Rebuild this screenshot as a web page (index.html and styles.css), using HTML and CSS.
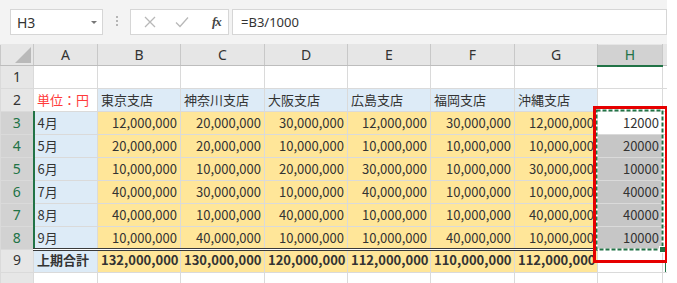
FILE: index.html
```html
<!DOCTYPE html>
<html lang="ja">
<head>
    <meta charset="UTF-8">
    <title>上期合計</title>
    <link rel="stylesheet" href="styles.css">
</head>
<body>
    <div class="app">
        <div class="formula-bar">
            <div class="name-box">
                <span>H3</span>
                <span class="caret"></span>
            </div>
            <div class="grip">
                <span></span><span></span><span></span>
            </div>
            <div class="fx-box">
                <svg class="icon" width="12" height="12" viewBox="0 0 12 12">
                    <path d="M1 1 L11 11 M11 1 L1 11" stroke="#b8b8b8" stroke-width="1.3" fill="none"/>
                </svg>
                <svg class="icon" width="14" height="12" viewBox="0 0 14 12">
                    <path d="M1 6.5 L5 10.5 L13 1.5" stroke="#b8b8b8" stroke-width="1.3" fill="none"/>
                </svg>
                <span class="fx">fx</span>
            </div>
            <div class="formula-input">=B3/1000</div>
        </div>

        <div class="sheet">
            <table class="grid">
                <colgroup>
                    <col class="c-head">
                    <col class="c-a">
                    <col class="c-b">
                    <col class="c-c">
                    <col class="c-d">
                    <col class="c-e">
                    <col class="c-f">
                    <col class="c-g">
                    <col class="c-h">
                    <col class="c-i">
                </colgroup>
                <tr class="col-heads">
                    <th class="corner"><span class="tri"></span></th>
                    <th>A</th><th>B</th><th>C</th><th>D</th><th>E</th><th>F</th><th>G</th>
                    <th class="sel">H</th><th></th>
                </tr>
                <tr>
                    <th class="rh">1</th>
                    <td></td><td></td><td></td><td></td><td></td><td></td><td></td><td></td><td></td>
                </tr>
                <tr>
                    <th class="rh">2</th>
                    <td class="unit">単位：円</td>
                    <td class="blue">東京支店</td>
                    <td class="blue">神奈川支店</td>
                    <td class="blue">大阪支店</td>
                    <td class="blue">広島支店</td>
                    <td class="blue">福岡支店</td>
                    <td class="blue">沖縄支店</td>
                    <td></td><td></td>
                </tr>
                <tr>
                    <th class="rh sel">3</th>
                    <td class="blue">4月</td>
                    <td class="yellow num">12,000,000</td>
                    <td class="yellow num">20,000,000</td>
                    <td class="yellow num">30,000,000</td>
                    <td class="yellow num">12,000,000</td>
                    <td class="yellow num">30,000,000</td>
                    <td class="yellow num">12,000,000</td>
                    <td class="num active">12000</td><td></td>
                </tr>
                <tr>
                    <th class="rh sel">4</th>
                    <td class="blue">5月</td>
                    <td class="yellow num">20,000,000</td>
                    <td class="yellow num">20,000,000</td>
                    <td class="yellow num">10,000,000</td>
                    <td class="yellow num">10,000,000</td>
                    <td class="yellow num">10,000,000</td>
                    <td class="yellow num">10,000,000</td>
                    <td class="num picked">20000</td><td></td>
                </tr>
                <tr>
                    <th class="rh sel">5</th>
                    <td class="blue">6月</td>
                    <td class="yellow num">10,000,000</td>
                    <td class="yellow num">10,000,000</td>
                    <td class="yellow num">20,000,000</td>
                    <td class="yellow num">30,000,000</td>
                    <td class="yellow num">10,000,000</td>
                    <td class="yellow num">30,000,000</td>
                    <td class="num picked">10000</td><td></td>
                </tr>
                <tr>
                    <th class="rh sel">6</th>
                    <td class="blue">7月</td>
                    <td class="yellow num">40,000,000</td>
                    <td class="yellow num">30,000,000</td>
                    <td class="yellow num">10,000,000</td>
                    <td class="yellow num">40,000,000</td>
                    <td class="yellow num">10,000,000</td>
                    <td class="yellow num">10,000,000</td>
                    <td class="num picked">40000</td><td></td>
                </tr>
                <tr>
                    <th class="rh sel">7</th>
                    <td class="blue">8月</td>
                    <td class="yellow num">40,000,000</td>
                    <td class="yellow num">10,000,000</td>
                    <td class="yellow num">40,000,000</td>
                    <td class="yellow num">10,000,000</td>
                    <td class="yellow num">10,000,000</td>
                    <td class="yellow num">40,000,000</td>
                    <td class="num picked">40000</td><td></td>
                </tr>
                <tr>
                    <th class="rh sel">8</th>
                    <td class="blue">9月</td>
                    <td class="yellow num">10,000,000</td>
                    <td class="yellow num">40,000,000</td>
                    <td class="yellow num">10,000,000</td>
                    <td class="yellow num">10,000,000</td>
                    <td class="yellow num">40,000,000</td>
                    <td class="yellow num">10,000,000</td>
                    <td class="num picked">10000</td><td></td>
                </tr>
                <tr class="total">
                    <th class="rh">9</th>
                    <td class="blue">上期合計</td>
                    <td class="yellow num">132,000,000</td>
                    <td class="yellow num">130,000,000</td>
                    <td class="yellow num">120,000,000</td>
                    <td class="yellow num">112,000,000</td>
                    <td class="yellow num">110,000,000</td>
                    <td class="yellow num">112,000,000</td>
                    <td></td><td></td>
                </tr>
                <tr>
                    <th class="rh"></th>
                    <td></td><td></td><td></td><td></td><td></td><td></td><td></td><td></td><td></td>
                </tr>
            </table>

            <!-- copy marquee around H3:H8 -->
            <svg class="marquee" width="69" height="142" viewBox="0 0 69 142">
                <rect x="1.5" y="1.5" width="66" height="139" fill="none" stroke="#fff" stroke-width="2"/>
                <rect x="1.5" y="1.5" width="66" height="139" fill="none" stroke="#217346" stroke-width="2" stroke-dasharray="4 2"/>
            </svg>
            <span class="handle"></span>
            <span class="tail"></span>
            <div class="callout"></div>
        </div>
    </div>
</body>
</html>
```

FILE: styles.css
```css
body {
    margin: 0;
    background: #fff;
    font-family: "Noto Sans CJK JP", "Noto Sans", sans-serif;
    color: #333;
}
.app {
    width: 667px;
    height: 283px;
    overflow: hidden;
}
.formula-bar {
    height: 44px;
    background: #f3f3f3;
    display: flex;
    align-items: flex-start;
    padding-top: 9px;
    box-sizing: border-box;
}
.name-box {
    margin-left: 10px;
    width: 93px;
    height: 26px;
    box-sizing: border-box;
    background: #fff;
    border: 1px solid #d6d6d6;
    display: flex;
    align-items: center;
    justify-content: space-between;
    padding: 0 5px 0 6px;
    font-family: "Noto Sans", sans-serif;
    font-size: 14px;
    color: #333;
}
.caret {
    width: 0;
    height: 0;
    border-left: 3px solid transparent;
    border-right: 3px solid transparent;
    border-top: 3px solid #777;
}
.grip {
    width: 27px;
    display: flex;
    flex-direction: column;
    align-items: center;
    gap: 2px;
    padding-top: 7px;
}
.grip span {
    width: 2px;
    height: 2px;
    background: #b5b5b5;
}
.fx-box {
    width: 99px;
    height: 26px;
    box-sizing: border-box;
    background: #fff;
    border: 1px solid #d6d6d6;
    display: flex;
    align-items: center;
    padding-left: 13px;
    gap: 19px;
}
.fx {
    font-family: "Liberation Serif", serif;
    font-style: italic;
    font-weight: bold;
    font-size: 13px;
    color: #444;
    letter-spacing: -1px;
    margin-left: 4px;
}
.formula-input {
    margin-left: 3px;
    flex: 1;
    height: 26px;
    box-sizing: border-box;
    background: #fff;
    border: 1px solid #d6d6d6;
    padding-left: 8px;
    font-family: "Noto Sans", sans-serif;
    font-size: 13px;
    line-height: 24px;
    color: #333;
}

.sheet {
    position: relative;
}
.grid {
    border-collapse: collapse;
    table-layout: fixed;
    width: 672px;
    font-size: 13px;
}
.c-head { width: 33px; }
.c-a { width: 64px; }
.c-b { width: 83px; }
.c-c { width: 84px; }
.c-d { width: 83px; }
.c-e { width: 83px; }
.c-f { width: 84px; }
.c-g { width: 83px; }
.c-h { width: 65px; }
.c-i { width: 10px; }

.grid tr {
    height: 23px;
}
.grid tr.col-heads {
    height: 21px;
}
.grid th,
.grid td {
    padding: 0 3px;
    border: 1px solid #dadada;
    white-space: nowrap;
    overflow: hidden;
    line-height: 16px;
}
.col-heads th {
    background: #e6e6e6;
    border-color: #e6e6e6 #c8c8c8 #bdbdbd;
    font-family: "Noto Sans", sans-serif;
    font-weight: normal;
    font-size: 14px;
    color: #333;
}
.col-heads th.sel {
    background: #d2d2d2;
    color: #217346;
    border-bottom: 2px solid #217346;
}
.corner {
    position: relative;
}
.tri {
    position: absolute;
    right: 2px;
    bottom: 2px;
    width: 0;
    height: 0;
    border-left: 16px solid transparent;
    border-bottom: 16px solid #b9b9b9;
}
.rh {
    background: #e6e6e6;
    border-color: #c8c8c8 #bdbdbd;
    font-family: "Noto Sans", sans-serif;
    font-weight: normal;
    font-size: 14px;
    color: #333;
}
.rh.sel {
    background: #d2d2d2;
    color: #217346;
    border-right: 2px solid #217346;
}
.unit {
    color: #ff3b3b;
}
.blue {
    background: #ddebf7;
    border: 2px solid #fff;
}
.yellow {
    background: #ffe699;
    border: 2px solid #fff;
}
.num {
    text-align: right;
}
.picked {
    background: #c6c6c6;
}
.total th,
.total td {
    padding-bottom: 3px;
}
.total td.blue,
.total td.yellow {
    border-top: 3px double #3a3a3a;
    font-weight: bold;
}

.marquee {
    position: absolute;
    left: 595px;
    top: 65px;
}
.handle {
    position: absolute;
    left: 659px;
    top: 202px;
    width: 5px;
    height: 5px;
    background: #217346;
    border: 1px solid #fff;
}
.tail {
    position: absolute;
    left: 665px;
    top: 216px;
    width: 1px;
    height: 12px;
    background: #217346;
}
.callout {
    position: absolute;
    left: 593px;
    top: 62px;
    width: 69px;
    height: 151px;
    border: 3px solid #e60000;
}
```
